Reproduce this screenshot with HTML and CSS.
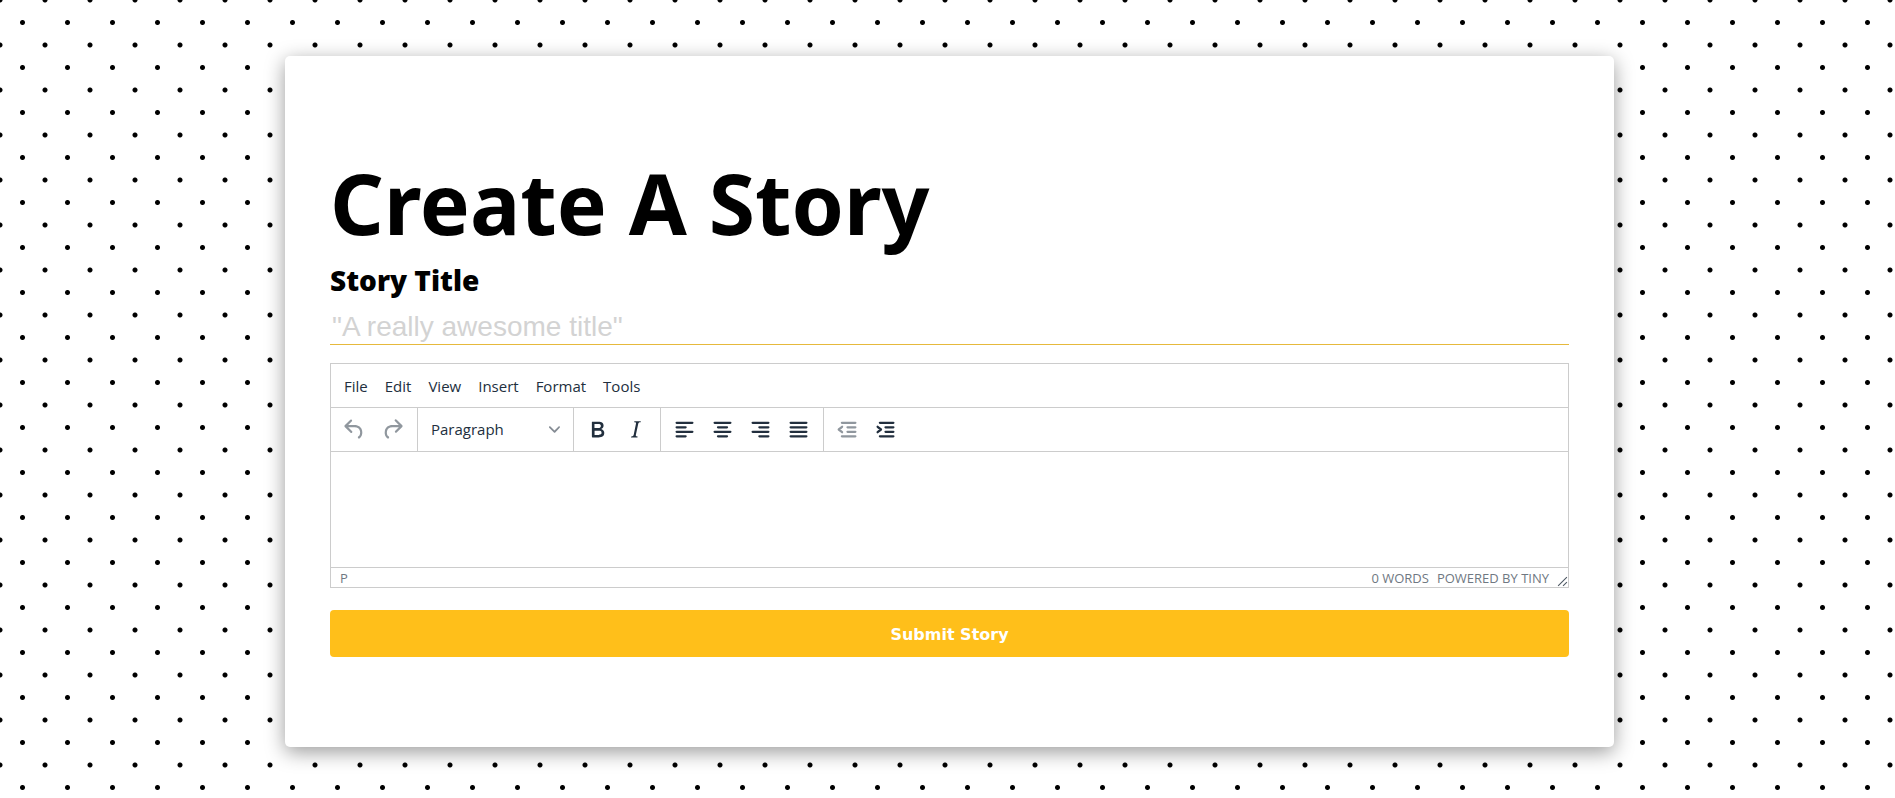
FILE: index.html
```html
<!DOCTYPE html>
<html lang="en">
<head>
<meta charset="utf-8">
<meta name="viewport" content="width=device-width, initial-scale=1">
<title>Create A Story</title>
<link rel="stylesheet" href="styles.css">
</head>
<body>
<main class="card">
  <h1 class="heading">Create A Story</h1>
  <form class="story-form">
    <label class="title-label" for="title">Story Title</label>
    <input class="title-input" id="title" type="text" placeholder='"A really awesome title"'>
    <section class="editor" aria-label="Story editor">
      <nav class="menubar">
        <button type="button" class="menu">File</button>
        <button type="button" class="menu">Edit</button>
        <button type="button" class="menu">View</button>
        <button type="button" class="menu">Insert</button>
        <button type="button" class="menu">Format</button>
        <button type="button" class="menu">Tools</button>
      </nav>
      <div class="toolbar">
        <div class="group">
          <button type="button" class="tool" aria-label="Undo" disabled><svg class="icon" viewBox="0 0 24 24"><path d="M6.4 8H12c3.7 0 6.2 2 6.8 5.1.6 2.7-.4 5.6-2.3 6.8a1 1 0 0 1-1-1.8c1.1-.6 1.8-2.7 1.4-4.6-.5-2.1-2.1-3.5-4.9-3.5H6.4l3.3 3.3a1 1 0 1 1-1.4 1.4l-5-5a1 1 0 0 1 0-1.4l5-5a1 1 0 0 1 1.4 1.4L6.4 8Z"/></svg></button>
          <button type="button" class="tool" aria-label="Redo" disabled><svg class="icon" viewBox="0 0 24 24"><path d="M17.6 10H12c-2.8 0-4.4 1.4-4.9 3.5-.4 2 .3 4 1.4 4.6a1 1 0 1 1-1 1.8c-2-1.2-2.9-4.1-2.3-6.8.6-3 3-5.1 6.8-5.1h5.6l-3.3-3.3a1 1 0 1 1 1.4-1.4l5 5a1 1 0 0 1 0 1.4l-5 5a1 1 0 0 1-1.4-1.4l3.3-3.3Z"/></svg></button>
        </div>
        <div class="group">
          <div class="format">
            <select class="format-select" aria-label="Block format"><option>Paragraph</option></select>
            <svg class="chevron" viewBox="0 0 10 10"><path d="M8.7 2.2c.3-.3.8-.3 1 0 .4.4.4.9 0 1.2L5.7 7.8c-.3.3-.9.3-1.2 0L.2 3.4a.8.8 0 0 1 0-1.2c.3-.3.8-.3 1.1 0L5 6l3.7-3.8Z"/></svg>
          </div>
        </div>
        <div class="group">
          <button type="button" class="tool" aria-label="Bold"><svg class="icon" viewBox="0 0 24 24"><path fill-rule="evenodd" d="M7.8 19c-.3 0-.5 0-.6-.2l-.2-.5V5.7c0-.2 0-.4.2-.5l.6-.2h5c1.5 0 2.7.3 3.5 1 .7.6 1.1 1.4 1.1 2.5a3 3 0 0 1-.6 1.9c-.4.6-1 1-1.6 1.2.4.1.9.3 1.3.6s.8.7 1 1.2c.4.4.5 1 .5 1.6 0 1.3-.4 2.3-1.3 3-.8.7-2.1 1-3.8 1H7.8Zm5-8.3c.6 0 1.2-.1 1.6-.5.4-.3.6-.7.6-1.3 0-1.1-.8-1.7-2.3-1.7H9.3v3.5h3.4Zm.5 6c.7 0 1.3-.1 1.7-.4.4-.4.6-.9.6-1.5s-.2-1-.7-1.4c-.4-.3-1-.4-2-.4H9.4v3.8h4Z"/></svg></button>
          <button type="button" class="tool" aria-label="Italic"><svg class="icon" viewBox="0 0 24 24"><path d="m16.7 4.7-.1.9h-.3c-.6 0-1 0-1.4.3-.3.3-.4.6-.5 1.1l-2.1 9.8v.6c0 .5.4.8 1.4.8h.2l-.2.8H8l.2-.8h.2c1.1 0 1.8-.5 2-1.5l2-9.8.1-.5c0-.6-.4-.8-1.4-.8h-.3l.2-.9h5.8Z"/></svg></button>
        </div>
        <div class="group">
          <button type="button" class="tool" aria-label="Align left"><svg class="icon lines" viewBox="0 0 24 24"><path d="M5 6h14M5 10h8M5 14h14M5 18h8"/></svg></button>
          <button type="button" class="tool" aria-label="Align center"><svg class="icon lines" viewBox="0 0 24 24"><path d="M5 6h14M8 10h8M5 14h14M8 18h8"/></svg></button>
          <button type="button" class="tool" aria-label="Align right"><svg class="icon lines" viewBox="0 0 24 24"><path d="M5 6h14M11 10h8M5 14h14M11 18h8"/></svg></button>
          <button type="button" class="tool" aria-label="Justify"><svg class="icon lines" viewBox="0 0 24 24"><path d="M5 6h14M5 10h14M5 14h14M5 18h14"/></svg></button>
        </div>
        <div class="group">
          <button type="button" class="tool" aria-label="Decrease indent" disabled><svg class="icon lines" viewBox="0 0 24 24"><path d="M7 6h12M12 10h7M12 14h7M7 18h12M7.2 9.6 4.2 12l3 2.4"/></svg></button>
          <button type="button" class="tool" aria-label="Increase indent"><svg class="icon lines" viewBox="0 0 24 24"><path d="M7 6h12M12 10h7M12 14h7M7 18h12M5 9.6 8 12l-3 2.4"/></svg></button>
        </div>
      </div>
      <div class="content" contenteditable="true" role="textbox" aria-label="Story text"></div>
      <footer class="statusbar">
        <span class="path">P</span>
        <span>0 WORDS</span>
        <a class="powered" href="#">POWERED BY TINY</a>
        <svg class="resize" viewBox="0 0 10 10"><path d="M1 9 9 1M5.5 9 9 5.5"/></svg>
      </footer>
    </section>
    <button class="submit" type="submit">Submit Story</button>
  </form>
</main>
</body>
</html>
```
FILE: styles.css
```css
* {
  box-sizing: border-box;
}

body {
  margin: 0;
  padding: 56px 281px 45px 285px;
  font-family: "Noto Sans", "Open Sans", sans-serif;
  color: #000;
  background-color: #fff;
  background-image:
    radial-gradient(circle at center, #000 2px, transparent 3px),
    radial-gradient(circle at top left, #000 2px, transparent 3px),
    radial-gradient(circle at top right, #000 2px, transparent 3px),
    radial-gradient(circle at bottom left, #000 2px, transparent 3px),
    radial-gradient(circle at bottom right, #000 2px, transparent 3px);
  background-size: 45px 45px;
}

.card {
  padding: 90px 45px;
  background: #fff;
  border-radius: 5px;
  box-shadow: 0 5px 20px rgba(0, 0, 0, 0.4);
}

.heading {
  margin: 0;
  font-size: 84px;
  line-height: 114px;
  font-weight: 700;
}

.story-form {
  display: flex;
  flex-direction: column;
}

.title-label {
  font-family: "Open Sans", sans-serif;
  font-size: 28px;
  line-height: 40px;
  font-weight: 800;
}

.title-input {
  height: 36px;
  margin-top: 9px;
  padding: 0 2px;
  border: 0;
  border-bottom: 1px solid #e6b93c;
  outline: 0;
  background: transparent;
  font-family: "Liberation Sans", Arial, sans-serif;
  font-size: 28px;
}

.title-input::placeholder {
  color: #d3d3d3;
}

.editor {
  margin-top: 18px;
  border: 1px solid #ccc;
  color: #222f3e;
}

.menubar,
.toolbar {
  display: flex;
  height: 44px;
  border-bottom: 1px solid #ccc;
}

.menubar {
  align-items: center;
  gap: 9px;
  padding: 0 9px;
}

.menu {
  padding: 0 4px;
  border: 0;
  background: transparent;
  color: inherit;
  font-family: "Open Sans", sans-serif;
  font-size: 15px;
  line-height: 32px;
}

.group {
  display: flex;
  align-items: center;
  padding: 0 6px 0 4px;
  border-right: 1px solid #ccc;
}

.group:last-child {
  border-right: 0;
}

.tool {
  display: flex;
  align-items: center;
  justify-content: center;
  width: 38px;
  height: 38px;
  padding: 0;
  border: 0;
  background: transparent;
  color: #222f3e;
}

.tool:disabled {
  color: #90979e;
}

.icon {
  width: 27px;
  height: 27px;
  fill: currentColor;
}

.lines {
  fill: none;
  stroke: currentColor;
  stroke-width: 2;
  stroke-linecap: round;
  stroke-linejoin: round;
}

.format {
  display: grid;
  align-items: center;
  width: 145px;
}

.format-select {
  grid-area: 1 / 1;
  width: 100%;
  height: 38px;
  padding: 0 9px 2px;
  border: 0;
  appearance: none;
  background: transparent;
  color: inherit;
  font-family: "Open Sans", sans-serif;
  font-size: 15px;
}

.chevron {
  grid-area: 1 / 1;
  justify-self: end;
  width: 11px;
  height: 11px;
  margin-right: 7px;
  fill: #858c94;
  pointer-events: none;
}

.content {
  height: 115px;
  outline: 0;
}

.statusbar {
  display: flex;
  align-items: center;
  gap: 8px;
  height: 20px;
  padding-left: 9px;
  border-top: 1px solid #ccc;
  color: #6f7882;
  font-family: "Open Sans", sans-serif;
  font-size: 13px;
  line-height: 18px;
}

.path {
  flex: 1;
}

.powered {
  color: inherit;
  text-decoration: none;
}

.resize {
  align-self: flex-end;
  width: 11px;
  height: 11px;
  fill: none;
  stroke: #4e5964;
}

.submit {
  height: 47px;
  margin-top: 22px;
  padding: 2px 6px 0;
  border: 0;
  border-radius: 4px;
  background: #ffbf1a;
  color: #fff;
  font-family: "Arial Black", "DejaVu Sans", sans-serif;
  font-size: 16px;
  font-weight: 900;
}
```
